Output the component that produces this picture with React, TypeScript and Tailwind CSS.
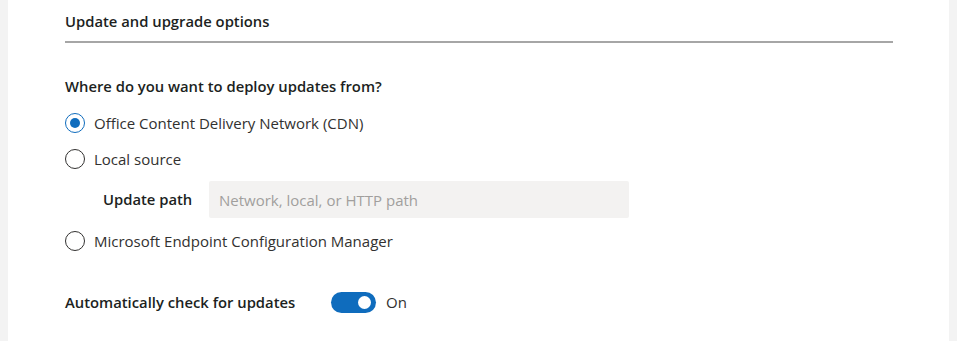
import { useState } from 'react';

const font = { fontFamily: '"Open Sans", "Noto Sans", sans-serif' };

type RadioProps = {
  label: string;
  checked: boolean;
  onSelect: () => void;
};

function Radio({ label, checked, onSelect }: RadioProps) {
  return (
    <button type="button" onClick={onSelect} className="flex h-[28px] items-center gap-[9px] text-left">
      <span
        className={
          checked
            ? 'flex h-[20px] w-[20px] items-center justify-center rounded-full border-[1.5px] border-[#0f6cbd]'
            : 'flex h-[20px] w-[20px] items-center justify-center rounded-full border-[1.5px] border-[#323130]'
        }
      >
        {checked && <span className="h-[10px] w-[10px] rounded-full bg-[#0f6cbd]" />}
      </span>
      <span className="text-[15px] text-[#323130]">{label}</span>
    </button>
  );
}

export default function App() {
  const [source, setSource] = useState('cdn');
  const [auto, setAuto] = useState(true);

  return (
    <div className="flex h-[341px] w-[957px] bg-[#f3f3f3]" style={font}>
      <div className="ml-[8px] h-full w-[941px] bg-white px-[57px] pr-[56px]">
        <div className="flex h-[41px] items-center pt-[1px]">
          <h2 className="text-[14.8px] font-semibold text-[#201f1e]">Update and upgrade options</h2>
        </div>
        <div className="h-[2px] bg-[#a6a6a6]" />

        <div className="mt-[32px] flex h-[22px] items-center">
          <h3 className="text-[14.8px] font-semibold text-[#201f1e]">
            Where do you want to deploy updates from?
          </h3>
        </div>

        <div className="mt-[12px] flex flex-col gap-[8px]">
          <Radio label="Office Content Delivery Network (CDN)" checked={source === 'cdn'} onSelect={() => setSource('cdn')} />
          <Radio label="Local source" checked={source === 'local'} onSelect={() => setSource('local')} />
        </div>

        <div className="mt-[8px] flex items-center pl-[38px]">
          <label className="w-[106px] text-[14.8px] font-semibold text-[#201f1e]">Update path</label>
          <input
            className="h-[37px] w-[420px] rounded-[2px] bg-[#f3f2f1] px-[10px] text-[15px] text-[#323130] placeholder:text-[#a19f9d] outline-none"
            placeholder="Network, local, or HTTP path"
          />
        </div>

        <div className="mt-[9px]">
          <Radio label="Microsoft Endpoint Configuration Manager" checked={source === 'mecm'} onSelect={() => setSource('mecm')} />
        </div>

        <div className="mt-[35px] flex h-[24px] items-center">
          <span className="w-[266px] text-[14.8px] font-semibold text-[#201f1e]">
            Automatically check for updates
          </span>
          <button
            type="button"
            onClick={() => setAuto(!auto)}
            className={
              auto
                ? 'flex h-[21px] w-[45px] items-center justify-end rounded-full bg-[#0f6cbd] px-[5px]'
                : 'flex h-[21px] w-[45px] items-center justify-start rounded-full border border-[#605e5c] bg-white px-[4px]'
            }
          >
            <span className={auto ? 'h-[13px] w-[13px] rounded-full bg-white' : 'h-[12px] w-[12px] rounded-full bg-[#605e5c]'} />
          </button>
          <span className="ml-[10px] text-[15px] text-[#323130]">{auto ? 'On' : 'Off'}</span>
        </div>
      </div>
    </div>
  );
}
